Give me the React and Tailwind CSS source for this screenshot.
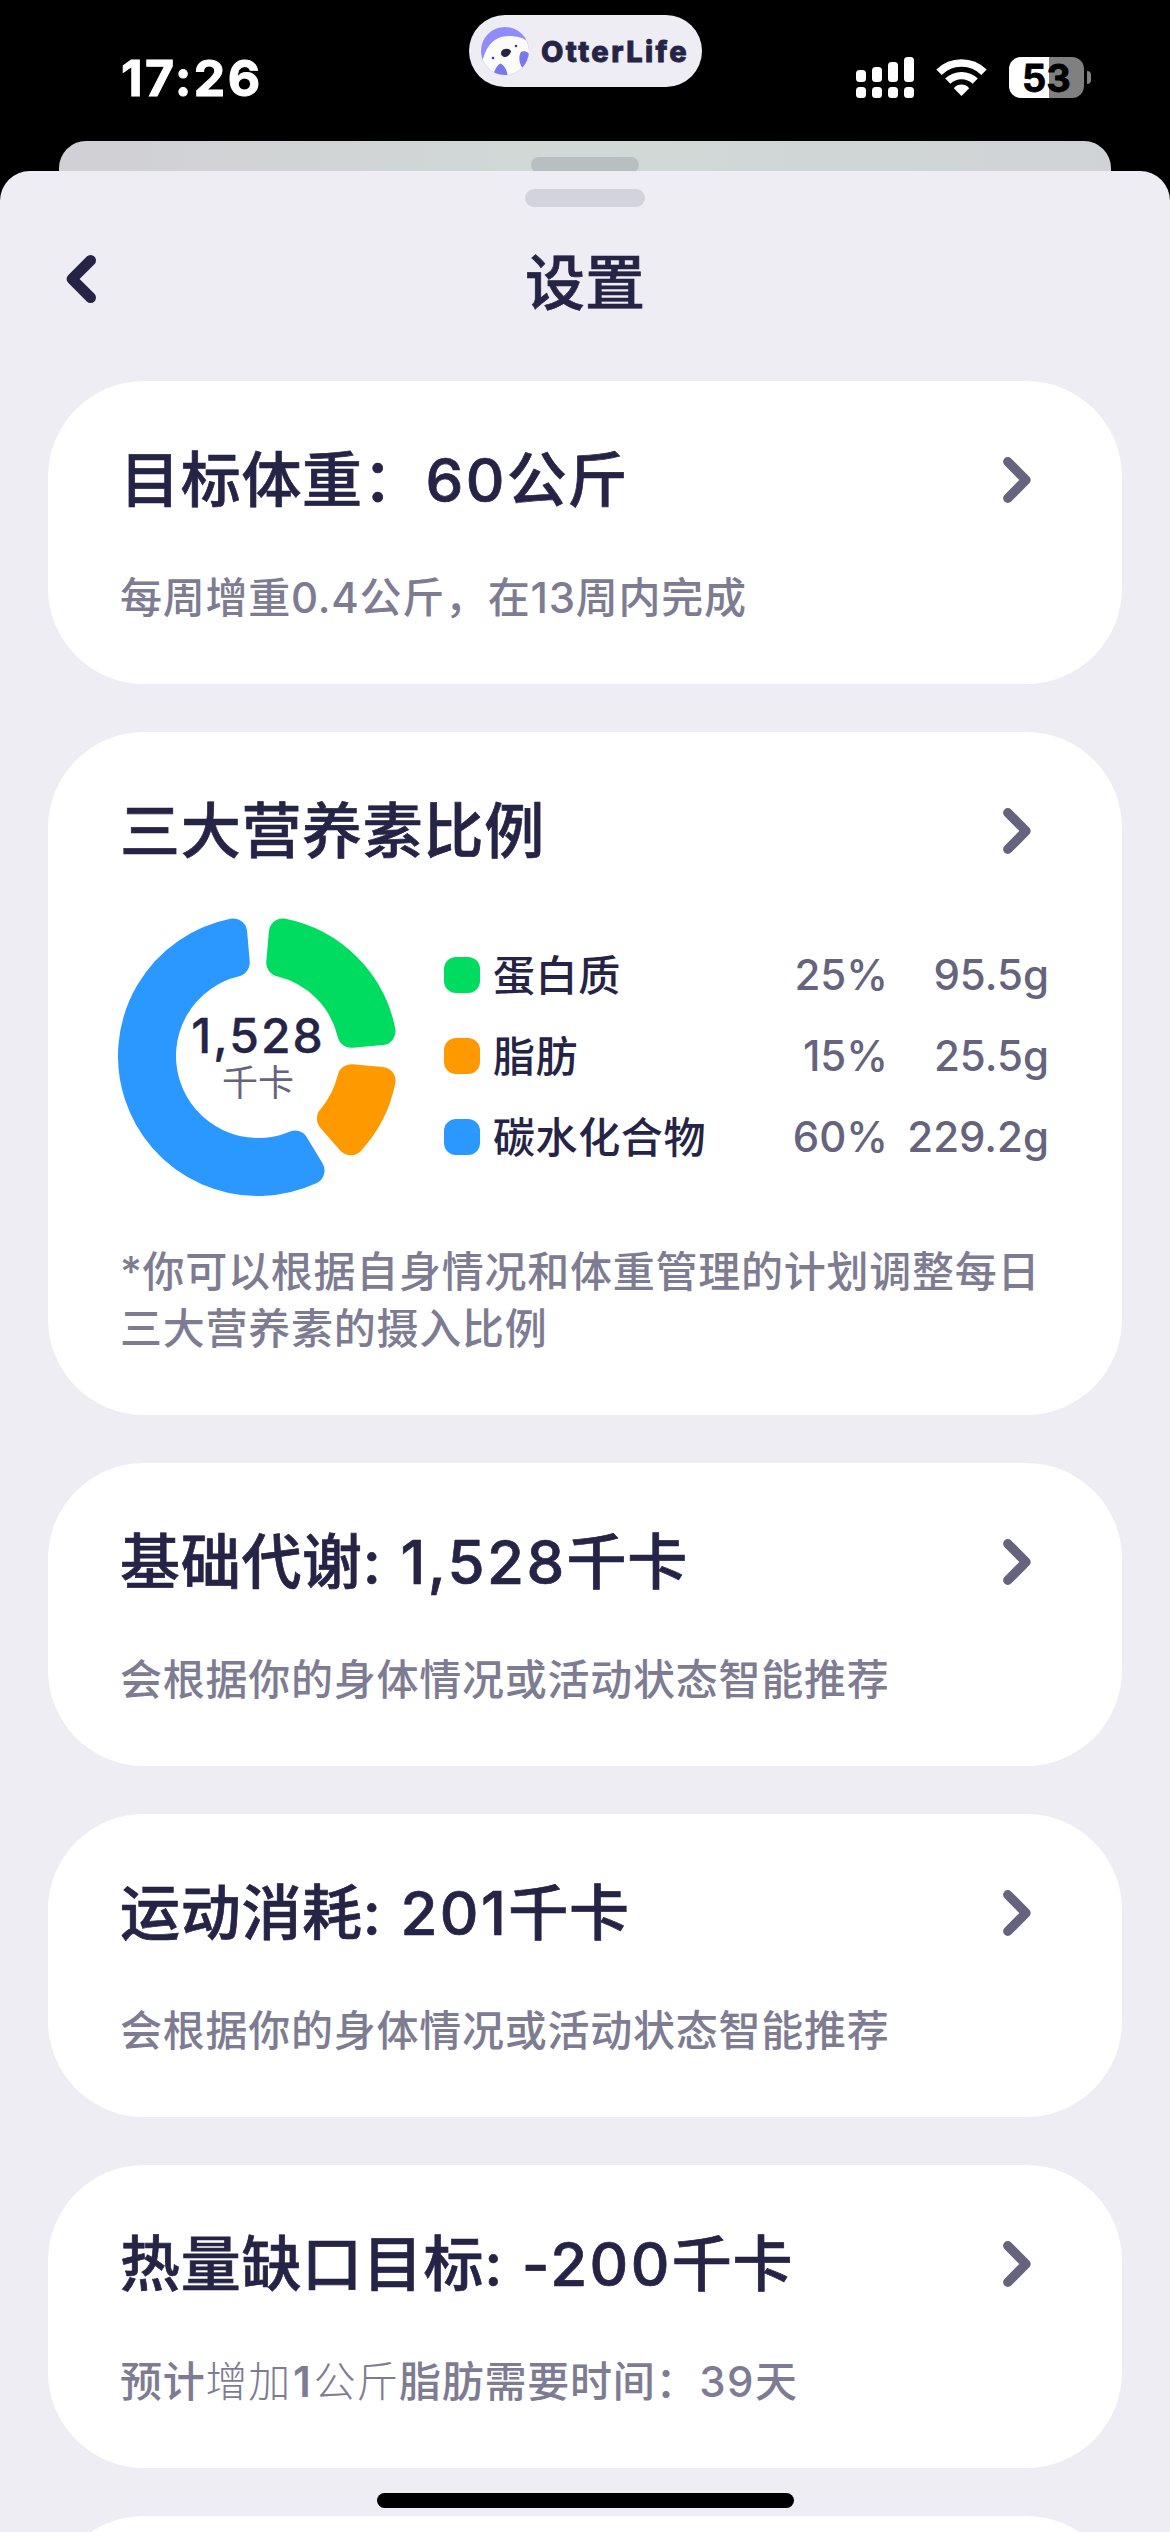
import React from "react";

const macros = [
  { name: "蛋白质", percent: 25, grams: "95.5g", fill: "#00dc5f", dot: "bg-[#00dc5f]" },
  { name: "脂肪", percent: 15, grams: "25.5g", fill: "#ff9900", dot: "bg-[#ff9900]" },
  { name: "碳水化合物", percent: 60, grams: "229.2g", fill: "#2b98ff", dot: "bg-[#2b98ff]" },
];

const OUTER = 140;
const INNER = 82;
const CORNER = 14;
const GAP = 5;

const polar = (radius, angle) => [
  OUTER + radius * Math.sin(angle),
  OUTER - radius * Math.cos(angle),
];

// The slice is inset by CORNER and stroked back out, which rounds its corners
function slicePath(fromDeg, toDeg) {
  const from = ((fromDeg + GAP) * Math.PI) / 180;
  const to = ((toDeg - GAP) * Math.PI) / 180;
  const ro = OUTER - CORNER;
  const ri = INNER + CORNER;
  const ao = Math.asin(CORNER / ro);
  const ai = Math.asin(CORNER / ri);
  const large = to - from > Math.PI ? 1 : 0;
  const [x1, y1] = polar(ro, from + ao);
  const [x2, y2] = polar(ro, to - ao);
  const [x3, y3] = polar(ri, to - ai);
  const [x4, y4] = polar(ri, from + ai);
  return `M${x1} ${y1}A${ro} ${ro} 0 ${large} 1 ${x2} ${y2}L${x3} ${y3}A${ri} ${ri} 0 ${large} 0 ${x4} ${y4}Z`;
}

function MacroChart() {
  let angle = 0;
  return (
    <div className="relative h-[280px] w-[280px]">
      <svg className="h-full w-full" viewBox="0 0 280 280">
        {macros.map((macro) => {
          const start = angle;
          angle += macro.percent * 3.6;
          return (
            <path
              key={macro.name}
              d={slicePath(start, angle)}
              fill={macro.fill}
              stroke={macro.fill}
              strokeWidth={CORNER * 2}
              strokeLinejoin="round"
            />
          );
        })}
      </svg>
      <div className="absolute inset-0 flex flex-col items-center pt-[93px]">
        <span className="text-[48px] leading-[54px] font-medium tracking-[2px] [-webkit-text-stroke:0.4px]">1,528</span>
        <span className="text-[36px] leading-[40px] text-[#65637e]">千卡</span>
      </div>
    </div>
  );
}

function Chevron() {
  return (
    <svg className="h-[46px] w-[28px]" viewBox="0 0 28 46" fill="none">
      <path
        d="M4.8 4.8L23 23L4.8 41.2"
        stroke="#65637e"
        strokeWidth="9.4"
        strokeLinecap="round"
        strokeLinejoin="round"
      />
    </svg>
  );
}

function Card({ title, value, unit, children }) {
  return (
    <section className="rounded-[96px] bg-white px-[72px] pt-[57px] pb-[58px]">
      <div className="flex items-center justify-between pr-[19px]">
        <h2 className="text-[60px] leading-[84px] font-medium tracking-[0.7px] whitespace-nowrap [-webkit-text-stroke:0.7px]">
          {title}
          {value && <span className="ml-[2px] tracking-[2.4px]">{value}</span>}
          {unit}
        </h2>
        <Chevron />
      </div>
      {children}
    </section>
  );
}

function Note({ children }) {
  return (
    <p className="mt-[47px] text-[42px] leading-[57px] font-medium tracking-[0.75px] whitespace-nowrap text-[#7e7c93]">
      {children}
    </p>
  );
}

function SignalIcon() {
  return (
    <svg className="h-[41px] w-[58px]" viewBox="0 0 58 41" fill="white">
      <rect x="0" y="13" width="10" height="12" rx="3.5" />
      <rect x="16" y="10" width="10" height="15" rx="3.5" />
      <rect x="32" y="5" width="10" height="20" rx="3.5" />
      <rect x="48" y="0" width="10" height="25" rx="3.5" />
      <rect x="0" y="30" width="10" height="11" rx="3.5" />
      <rect x="16" y="30" width="10" height="11" rx="3.5" />
      <rect x="32" y="30" width="10" height="11" rx="3.5" />
      <rect x="48" y="30" width="10" height="11" rx="3.5" />
    </svg>
  );
}

function WifiIcon() {
  return (
    <svg className="h-[37px] w-[51px]" viewBox="0 0 51 37" fill="none" stroke="white">
      <path d="M3 13.2A32 32 0 0 1 48 13.2" strokeWidth="7.6" />
      <path d="M11.8 22.2A19.5 19.5 0 0 1 39.2 22.2" strokeWidth="7.4" />
      <path d="M25.5 37L17.8 29.3C20 26.6 22.6 25.6 25.5 25.6S31 26.6 33.2 29.3Z" fill="white" stroke="none" />
    </svg>
  );
}

function Battery() {
  return (
    <div className="flex items-center">
      <div className="flex h-[41px] w-[75px] items-center justify-center rounded-[12px] bg-linear-to-r from-white from-[53%] to-[#808080] to-[53%] text-[38px] leading-none font-bold text-black [-webkit-text-stroke:0.8px]">
        53
      </div>
      <div className="ml-[3px] h-[13px] w-[4px] rounded-r-full bg-[#808080]" />
    </div>
  );
}

function OtterIcon() {
  return (
    <svg className="h-12 w-12" viewBox="0 0 48 48">
      <clipPath id="otter-face">
        <circle cx="24" cy="24" r="24" />
      </clipPath>
      <g clipPath="url(#otter-face)">
        <rect width="48" height="48" fill="#8f8cfb" />
        <path d="M1 36C4 22 11 9 28 9C36 9 43 11 48 15V48H6Z" fill="#fbfbf8" />
        <path d="M12 48C14 42 17 37 19.500 36.500C23 38 26 43 26.500 48Z" fill="#7a77ee" />
        <path d="M40 25C43 23 48 25 48 28L43 42C38 39 37 29 40 25Z" fill="#7a77ee" />
        <path d="M22 22.500C26 21 30 22 30 24.500C29 28 26 30.500 23 30C19.500 29 19 25 22 22.500Z" fill="#262446" />
        <circle cx="12" cy="31" r="1.3" fill="#3a35c0" />
        <circle cx="35" cy="19" r="1.3" fill="#3a35c0" />
      </g>
    </svg>
  );
}

function StatusBar() {
  return (
    <header className="relative flex h-[141px] justify-between pr-[79px] pl-[121px]">
      <div className="pt-[48px] text-[50px] leading-[60px] font-bold tracking-[2.4px] text-white [-webkit-text-stroke:1px]">
        17:26
      </div>
      <div className="absolute top-[15px] left-[469px] flex h-[72px] w-[233px] items-center rounded-full bg-[#eeedf4] pl-3">
        <OtterIcon />
        <span className="ml-3 text-[29px] leading-none font-extrabold tracking-[2.4px] [-webkit-text-stroke:0.8px]">
          OtterLife
        </span>
      </div>
      <div className="flex items-start pt-[57px]">
        <SignalIcon />
        <div className="mt-[2px] mr-[22px] ml-[22px]">
          <WifiIcon />
        </div>
        <Battery />
      </div>
    </header>
  );
}

function App() {
  return (
    <div className="h-[2532px] w-[1170px] overflow-hidden bg-black font-['Inter','Noto_Sans_CJK_SC',sans-serif] text-[#262446]">
      <StatusBar />

      {/* Sheet underneath */}
      <div className="mx-[59px] flex h-[30px] justify-center overflow-hidden rounded-t-[27px] bg-linear-to-r from-[#d1d0d5] via-[#d1d9d6] to-[#d0d3d6] pt-4">
        <div className="h-4 w-[108px] shrink-0 rounded-full bg-[#b8bfc1]" />
      </div>

      {/* Settings sheet */}
      <main className="h-[2361px] overflow-hidden rounded-t-[30px] bg-[#eeedf4] pt-[18px]">
        <div className="mx-auto h-[18px] w-[120px] rounded-full bg-[#d3d3db]" />
        <div className="grid h-[150px] grid-cols-3 items-center px-[66px]">
          <svg className="-mt-[6px] h-[48px] w-[30px]" viewBox="0 0 30 48" fill="none">
            <path
              d="M24.6 5.4L6 24L24.6 42.6"
              stroke="#262446"
              strokeWidth="10.8"
              strokeLinecap="round"
              strokeLinejoin="round"
            />
          </svg>
          <h1 className="pt-[2px] text-center text-[60px] leading-[84px] font-medium [-webkit-text-stroke:0.7px]">
            设置
          </h1>
        </div>

        <div className="mt-[24px] flex flex-col gap-12 px-12">
          <Card title="目标体重：" value="60" unit="公斤">
            <Note>每周增重0.4公斤，在13周内完成</Note>
          </Card>

          <Card title="三大营养素比例">
            <div className="mt-[43px] -ml-[2px] flex">
              <MacroChart />
              <ul className="ml-[46px] flex w-[605px] flex-col pt-[18px] text-[42px] leading-[81px] font-medium">
                {macros.map((macro) => (
                  <li key={macro.name} className="flex h-[81px] items-center">
                    <span className={`h-9 w-9 rounded-[12px] ${macro.dot}`} />
                    <span className="ml-[13px] flex-1 pt-[2px] tracking-[0.6px]">{macro.name}</span>
                    <span className="text-[#65637e]">{macro.percent}%</span>
                    <span className="w-[161px] text-right text-[#65637e]">{macro.grams}</span>
                  </li>
                ))}
              </ul>
            </div>
            <Note>
              *你可以根据自身情况和体重管理的计划调整每日
              <br />
              三大营养素的摄入比例
            </Note>
          </Card>

          <Card title="基础代谢: " value="1,528" unit="千卡">
            <Note>会根据你的身体情况或活动状态智能推荐</Note>
          </Card>

          <Card title="运动消耗: " value="201" unit="千卡">
            <Note>会根据你的身体情况或活动状态智能推荐</Note>
          </Card>

          <Card title="热量缺口目标: " value="-200" unit="千卡">
            <Note>
              预计<span className="font-light">增加</span>
              <span className="mx-[2px] font-semibold">1</span>
              <span className="font-light">公斤</span>脂肪需要时间：
              <span className="ml-[1px] tracking-[1.4px]">39</span>天
            </Note>
          </Card>

          <section className="h-[303px] rounded-[96px] bg-white" />
        </div>
      </main>

      {/* Home indicator */}
      <div className="absolute top-[2493px] left-[377px] h-[15px] w-[417px] rounded-full bg-black" />
    </div>
  );
}

export default App;
